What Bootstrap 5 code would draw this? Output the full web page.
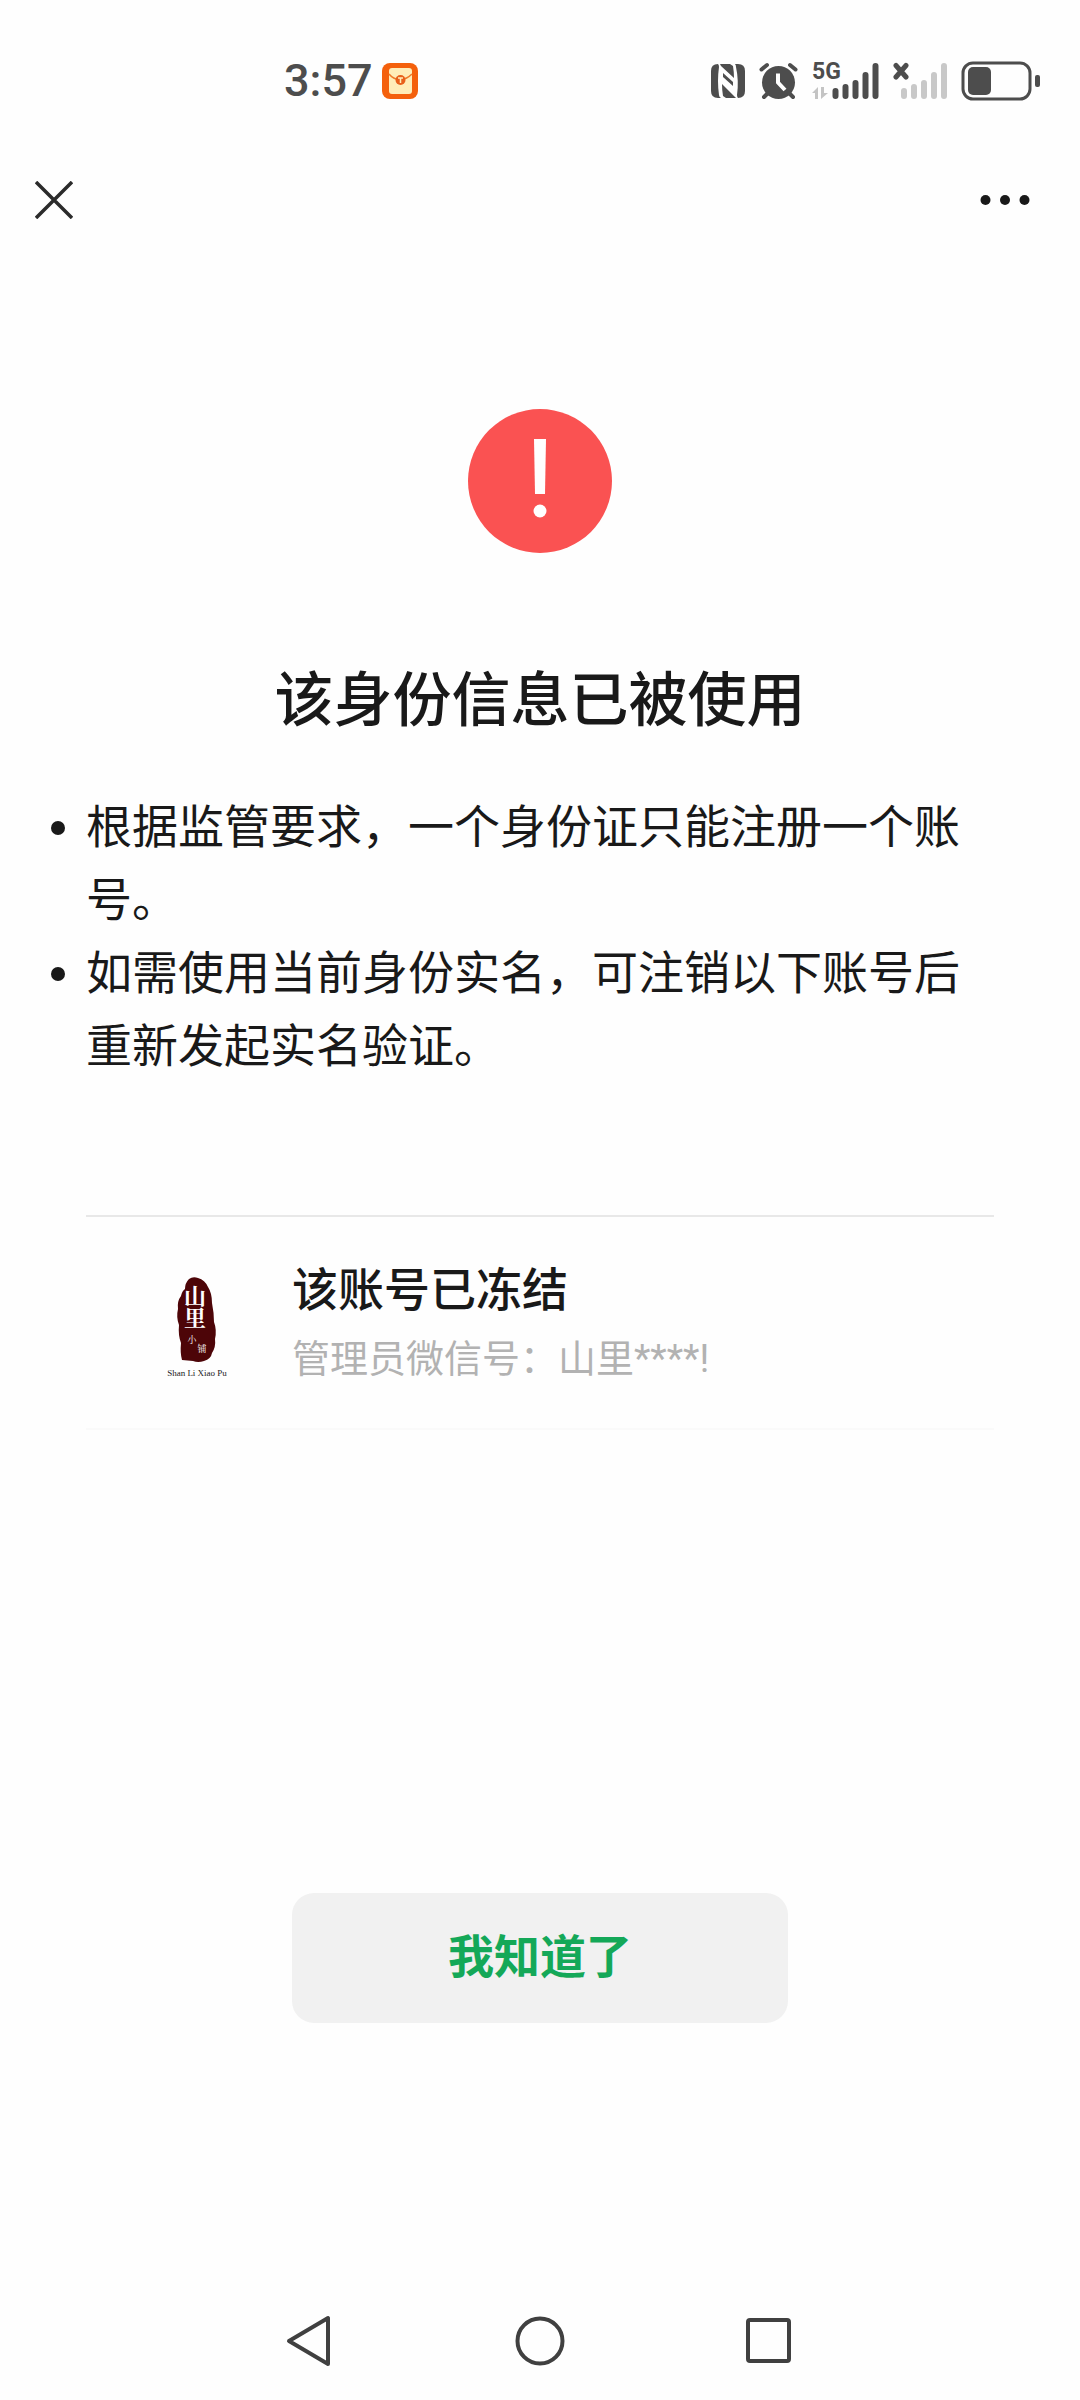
<!DOCTYPE html>
<html lang="zh-CN">
<head>
<meta charset="utf-8">
<meta name="viewport" content="width=device-width, initial-scale=1">
<title>该身份信息已被使用</title>
<link href="https://cdn.jsdelivr.net/npm/bootstrap@5.3.0/dist/css/bootstrap.min.css" rel="stylesheet">
<style>
  body { font-family: "Noto Sans CJK SC", sans-serif; color: #191919; background: #fefefe; }
  svg { display: block; flex: none; }
  .status-bar { height: 160px; padding: 2px 40px 0 284px; color: #4d4d4d; }
  .clock { font: 500 45px/60px Roboto, sans-serif; }
  .status-icons { gap: 14px; }
  .net-type { font: 700 23px/24px Roboto, sans-serif; top: -2px; left: 0; }
  .top-bar { height: 80px; padding: 0 40px 0 25px; }
  .plain-btn { padding: 10px; border: 0; background: none; color: inherit; }
  .content { padding: 169px 86px 0; }
  .page-title { font-size: 59px; line-height: 80px; font-weight: 500; margin: 103px 0 0; }
  .reasons { font-size: 46px; line-height: 73px; margin: 51px 0 0; }
  .reasons li::before { content: ""; flex: none; width: 14px; height: 14px; border-radius: 50%; background: #191919; margin: 34px 21px 0 -35px; }
  .account { margin-top: 136px; border-top: 2px solid #e8e8e8; border-bottom: 2px solid #fafafa; padding: 36px 0 42px 76px; gap: 60px; }
  .account-logo { margin-top: 18px; }
  .account-name { font-size: 46px; line-height: 66px; font-weight: 500; margin: 0; }
  .account-admin { font-family: Roboto, "Noto Sans CJK SC", sans-serif; font-size: 38px; line-height: 54px; color: #b2b2b2; margin: 13px 0 0; }
  .ack-btn { width: 496px; height: 130px; border-radius: 22px; background: #f1f1f1; color: #14a858; font-size: 46px; line-height: 66px; font-weight: 700; padding: 0 0 10px; margin-bottom: 259px; }
  .ack-btn:hover { background: #e8e8e8; color: #14a858; }
  .system-nav { height: 118px; gap: 159px; color: #404040; }
</style>
</head>
<body class="d-flex flex-column min-vh-100">
<header>
  <div class="status-bar d-flex align-items-center justify-content-between">
    <div class="d-flex align-items-center gap-2">
      <span class="clock">3:57</span>
      <svg width="38" height="38" viewBox="0 0 38 38" aria-hidden="true">
        <rect x="1" y="1" width="36" height="36" rx="8" fill="#f4600c"/>
        <rect x="8" y="6" width="23" height="26" rx="3" fill="#ffedb8"/>
        <path d="M8 12q4 5 11 6q7-1 12-6" fill="none" stroke="#ef7a2a" stroke-width="1.5"/>
        <circle cx="19.500" cy="18" r="5" fill="#e8601a"/>
        <path d="M17 16h5M19.500 16v5" stroke="#ffedb8" stroke-width="1.5"/>
      </svg>
    </div>
    <div class="status-icons d-flex align-items-center">
      <svg width="34" height="34" viewBox="0 0 34 34" fill="currentColor" aria-label="NFC">
        <path d="M7 0Q8 1 8 3Q6 17 8 31Q8 33 10 34H7Q0 34 0 27V7Q0 0 7 0ZM27 34Q26 33 26 31Q28 17 25 3Q25 1 24 0H27Q34 0 34 7V27Q34 34 27 34Z"/>
        <path d="M9 0H19L22 2Q23 8 23 14L10 2ZM25 34H15L12 32Q11 26 11 20L24 33Z"/>
        <path d="M12 9L22 18V22L12 13Z"/>
      </svg>
      <svg width="39" height="38" viewBox="0 0 39 38" fill="none" stroke="currentColor" stroke-linecap="round" aria-label="闹钟">
        <circle cx="19.500" cy="20.500" r="16.500" fill="currentColor" stroke="none"/>
        <path d="M2.500 7.500L8 3M36.500 7.500L31 3" stroke-width="4"/>
        <path d="M9 31L5 35M30 31L34 35" stroke-width="4"/>
        <path d="M19 11.500V20.500L26 28" stroke="#fefefe" stroke-width="4" stroke-linecap="butt"/>
      </svg>
      <div class="position-relative">
        <span class="net-type position-absolute">5G</span>
        <svg width="67" height="38" viewBox="0 0 67 38" aria-label="信号">
          <path d="M0 31L6 25V37H3V31ZM9 25H12V31H16L9 37Z" fill="#c4c4c4"/>
          <path d="M23.500 29V34M33.500 25V34M43.500 21V34M53.500 13V34M63.500 4V34" stroke="#4d4d4d" stroke-width="6" stroke-linecap="round"/>
        </svg>
      </div>
      <svg width="54" height="38" viewBox="0 0 54 38" aria-label="无信号">
        <path d="M3 3.500L13 15M13 3.500L3 15" stroke="#4d4d4d" stroke-width="5" stroke-linecap="round"/>
        <path d="M11 29V34M21 25V34M31 21V34M41 13V34M51 4V34" stroke="#c8c8c8" stroke-width="6" stroke-linecap="round"/>
      </svg>
      <svg width="79" height="40" viewBox="0 0 79 40" aria-label="电量">
        <rect x="2" y="2" width="67" height="36" rx="10" fill="none" stroke="#4d4d4d" stroke-width="3"/>
        <rect x="7" y="6" width="23" height="28" rx="5" fill="#4d4d4d"/>
        <rect x="74" y="14" width="5" height="12" rx="2" fill="#4d4d4d"/>
      </svg>
    </div>
  </div>
  <nav class="top-bar d-flex align-items-center justify-content-between">
    <button type="button" class="plain-btn" aria-label="关闭">
      <svg width="38" height="38" viewBox="0 0 38 38" stroke="#2b2b2b" stroke-width="3.500"><path d="M1 1L37 37M37 1L1 37"/></svg>
    </button>
    <button type="button" class="plain-btn" aria-label="更多">
      <svg width="50" height="12" viewBox="0 0 50 12" fill="#191919"><circle cx="5.500" cy="6" r="5"/><circle cx="25" cy="6" r="5"/><circle cx="44.500" cy="6" r="5"/></svg>
    </button>
  </nav>
</header>

<main class="content d-flex flex-column flex-grow-1">
  <svg class="align-self-center" width="144" height="144" viewBox="0 0 144 144" aria-hidden="true">
    <circle cx="72" cy="72" r="72" fill="#fa5252"/>
    <path d="M66 30H78L77 85H67Z" fill="#fff"/>
    <circle cx="72" cy="102" r="6.500" fill="#fff"/>
  </svg>
  <h1 class="page-title text-center">该身份信息已被使用</h1>
  <ul class="reasons list-unstyled">
    <li class="d-flex"><span>根据监管要求，一个身份证只能注册一个账号。</span></li>
    <li class="d-flex"><span>如需使用当前身份实名，可注销以下账号后重新发起实名验证。</span></li>
  </ul>
  <section class="account d-flex align-items-center">
    <svg class="account-logo" width="70" height="108" viewBox="0 0 70 108" role="img" aria-label="山里小铺">
      <path d="M27 4Q31 1 36 3Q43 5 46 12Q50 18 50 28Q52 38 52 47Q55 55 53 64Q54 72 50 78Q49 84 42 86Q36 88 31 86L20 85Q18 78 19 68Q16 60 17 50Q14 42 16 34Q15 26 19 21Q20 16 23 14Q23 8 27 4Z" fill="#4d0508"/>
      <g fill="#fff" font-family="Noto Serif CJK SC, Noto Sans CJK SC, serif">
        <text x="33" y="10" font-size="22" font-weight="700" writing-mode="vertical-rl">山里</text>
        <text x="30" y="68" font-size="9" text-anchor="middle">小</text>
        <text x="40" y="77" font-size="9" text-anchor="middle">铺</text>
      </g>
      <text x="35" y="101" font-size="9" text-anchor="middle" font-family="Liberation Serif, serif" fill="#222">Shan Li Xiao Pu</text>
    </svg>
    <div>
      <h2 class="account-name">该账号已冻结</h2>
      <p class="account-admin">管理员微信号：山里****!</p>
    </div>
  </section>
  <button type="button" class="ack-btn btn mt-auto align-self-center">我知道了</button>
</main>

<footer class="system-nav d-flex align-items-center justify-content-center">
  <button type="button" class="plain-btn" aria-label="返回">
    <svg width="50" height="52" viewBox="0 0 50 52" fill="none" stroke="currentColor" stroke-width="4" stroke-linejoin="round"><path d="M3 26L42 3V49Z"/></svg>
  </button>
  <button type="button" class="plain-btn" aria-label="主屏幕">
    <svg width="50" height="52" viewBox="0 0 50 52" fill="none" stroke="currentColor" stroke-width="4"><circle cx="25" cy="26" r="22.500"/></svg>
  </button>
  <button type="button" class="plain-btn" aria-label="最近任务">
    <svg width="50" height="52" viewBox="0 0 50 52" fill="none" stroke="currentColor" stroke-width="4"><rect x="4" y="5" width="41" height="41" rx="2"/></svg>
  </button>
</footer>
<script src="https://cdn.jsdelivr.net/npm/bootstrap@5.3.0/dist/js/bootstrap.bundle.min.js"></script>
</body>
</html>
